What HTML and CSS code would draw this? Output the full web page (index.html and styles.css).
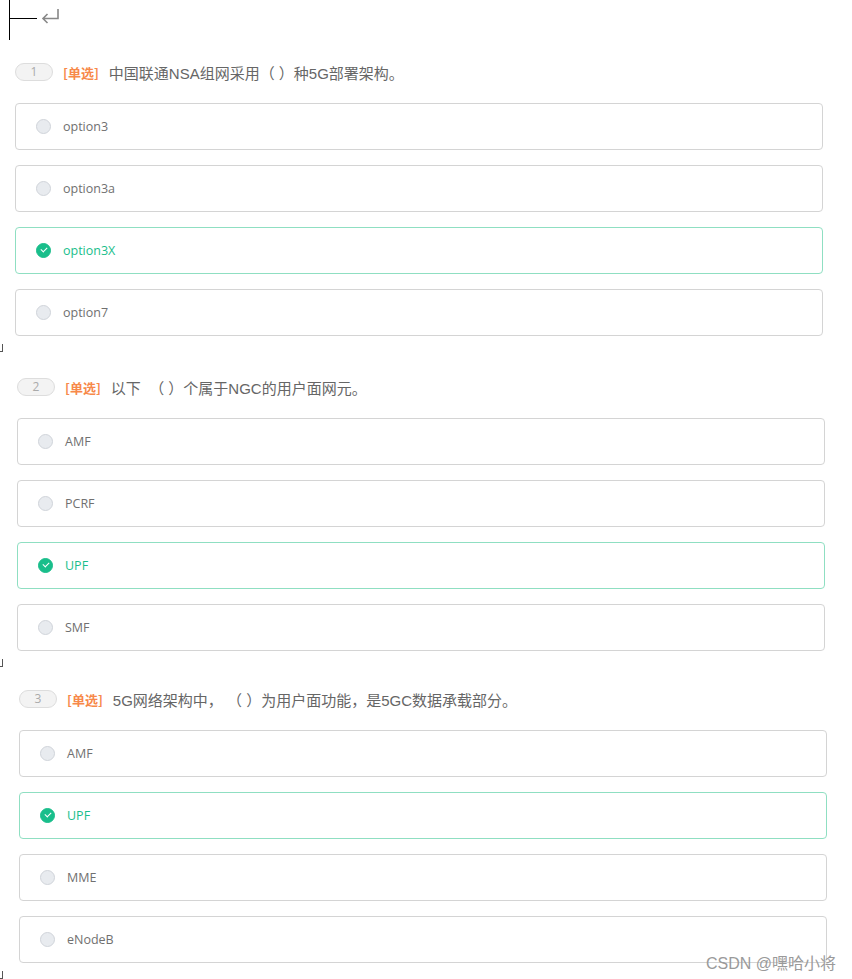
FILE: index.html
```html
<!DOCTYPE html>
<html lang="zh">
<head>
  <meta charset="UTF-8">
  <meta name="viewport" content="width=device-width, initial-scale=1.0">
  <title>5G 单选题</title>
  <link rel="stylesheet" href="styles.css">
</head>
<body>

<!-- Curseur de l'éditeur -->
<div class="caret">
  <svg width="64" height="42" viewBox="0 0 64 42">
    <line x1="9.5" y1="0" x2="9.5" y2="40" stroke="#000" stroke-width="1"/>
    <line x1="9" y1="18.5" x2="37" y2="18.5" stroke="#000" stroke-width="1"/>
    <path d="M58 9 V18.5 H43 M47.5 14 L43 18.5 L47.5 23" fill="none" stroke="#888" stroke-width="1.6"/>
  </svg>
</div>

<!-- Question 1 -->
<div class="question q1">
  <div class="question-head">
    <span class="num">1</span>
    <span class="type">[单选]</span>
    <span class="title">中国联通NSA组网采用（ ）种5G部署架构。</span>
  </div>
  <div class="option"><span class="radio"></span>option3</div>
  <div class="option"><span class="radio"></span>option3a</div>
  <div class="option checked"><span class="radio"></span>option3X</div>
  <div class="option"><span class="radio"></span>option7</div>
</div>
<div class="break"><span class="mark"></span></div>

<!-- Question 2 -->
<div class="question q2">
  <div class="question-head">
    <span class="num">2</span>
    <span class="type">[单选]</span>
    <span class="title">以下 &nbsp;（ ）个属于NGC的用户面网元。</span>
  </div>
  <div class="option"><span class="radio"></span>AMF</div>
  <div class="option"><span class="radio"></span>PCRF</div>
  <div class="option checked"><span class="radio"></span>UPF</div>
  <div class="option"><span class="radio"></span>SMF</div>
</div>
<div class="break short"><span class="mark"></span></div>

<!-- Question 3 -->
<div class="question q3">
  <div class="question-head">
    <span class="num">3</span>
    <span class="type">[单选]</span>
    <span class="title">5G网络架构中， （ ）为用户面功能，是5GC数据承载部分。</span>
  </div>
  <div class="option"><span class="radio"></span>AMF</div>
  <div class="option checked"><span class="radio"></span>UPF</div>
  <div class="option"><span class="radio"></span>MME</div>
  <div class="option"><span class="radio"></span>eNodeB</div>
</div>
<div class="break"><span class="mark"></span></div>

<div class="watermark">CSDN @嘿哈小将</div>

</body>
</html>
```

FILE: styles.css
```css
/* Style global */
body {
  margin: 0;
  padding: 0;
  background-color: #ffffff;
  font-family: "Open Sans", "Noto Sans CJK SC", sans-serif;
  color: #666666;
  position: relative;
  height: 979px;
  overflow: hidden;
}

.caret {
  height: 63px;
}

.caret svg {
  display: block;
}

/* Questions */
.question {
  margin-right: 29px;
}

.q1 { margin-left: 15px; }
.q2 { margin-left: 17px; margin-right: 27px; }
.q3 { margin-left: 19px; margin-right: 25px; }

.question-head {
  display: flex;
  align-items: center;
  height: 18px;
  margin-bottom: 22px;
  white-space: pre;
}

.num {
  box-sizing: border-box;
  width: 38px;
  height: 18px;
  border: 1px solid #dddddd;
  border-radius: 9px;
  background-color: #f3f3f3;
  color: #aaaaaa;
  font-size: 12px;
  line-height: 16px;
  text-align: center;
}

.type {
  margin-left: 10px;
  color: #f7894a;
  font-family: "Noto Sans CJK SC", sans-serif;
  font-size: 13px;
  font-weight: bold;
}

.title {
  margin-left: 10px;
  font-family: "Liberation Sans", "Noto Sans CJK SC", sans-serif;
  font-size: 15px;
  color: #666666;
}

/* Options */
.option {
  box-sizing: border-box;
  display: flex;
  align-items: center;
  height: 47px;
  margin-bottom: 15px;
  padding-left: 20px;
  border: 1px solid #d4d4d4;
  border-radius: 4px;
  font-size: 12.5px;
  color: #707070;
}

.option:last-child {
  margin-bottom: 0;
}

.radio {
  box-sizing: border-box;
  width: 15px;
  height: 15px;
  margin-right: 12px;
  border: 1px solid #d0d4da;
  border-radius: 50%;
  background-color: #e8ebef;
  position: relative;
}

.option.checked {
  border-color: #8fdfc2;
  color: #19be8b;
}

.option.checked .radio {
  border-color: #19be8b;
  background-color: #19be8b;
}

.option.checked .radio::after {
  content: "";
  position: absolute;
  left: 4px;
  top: 3px;
  width: 5px;
  height: 3px;
  border-left: 1.5px solid #ffffff;
  border-bottom: 1.5px solid #ffffff;
  transform: rotate(-45deg);
}

/* Marques de paragraphe */
.break {
  box-sizing: border-box;
  height: 42px;
  padding-top: 8px;
}

.break.short {
  height: 39px;
}

.mark {
  display: block;
  width: 2px;
  height: 7px;
  border-right: 1px solid #555555;
  border-bottom: 1px solid #555555;
}

.watermark {
  position: absolute;
  right: 16px;
  top: 950px;
  font-family: "Liberation Sans", "Noto Sans CJK SC", sans-serif;
  font-size: 16px;
  color: #9a9a9a;
}
```
